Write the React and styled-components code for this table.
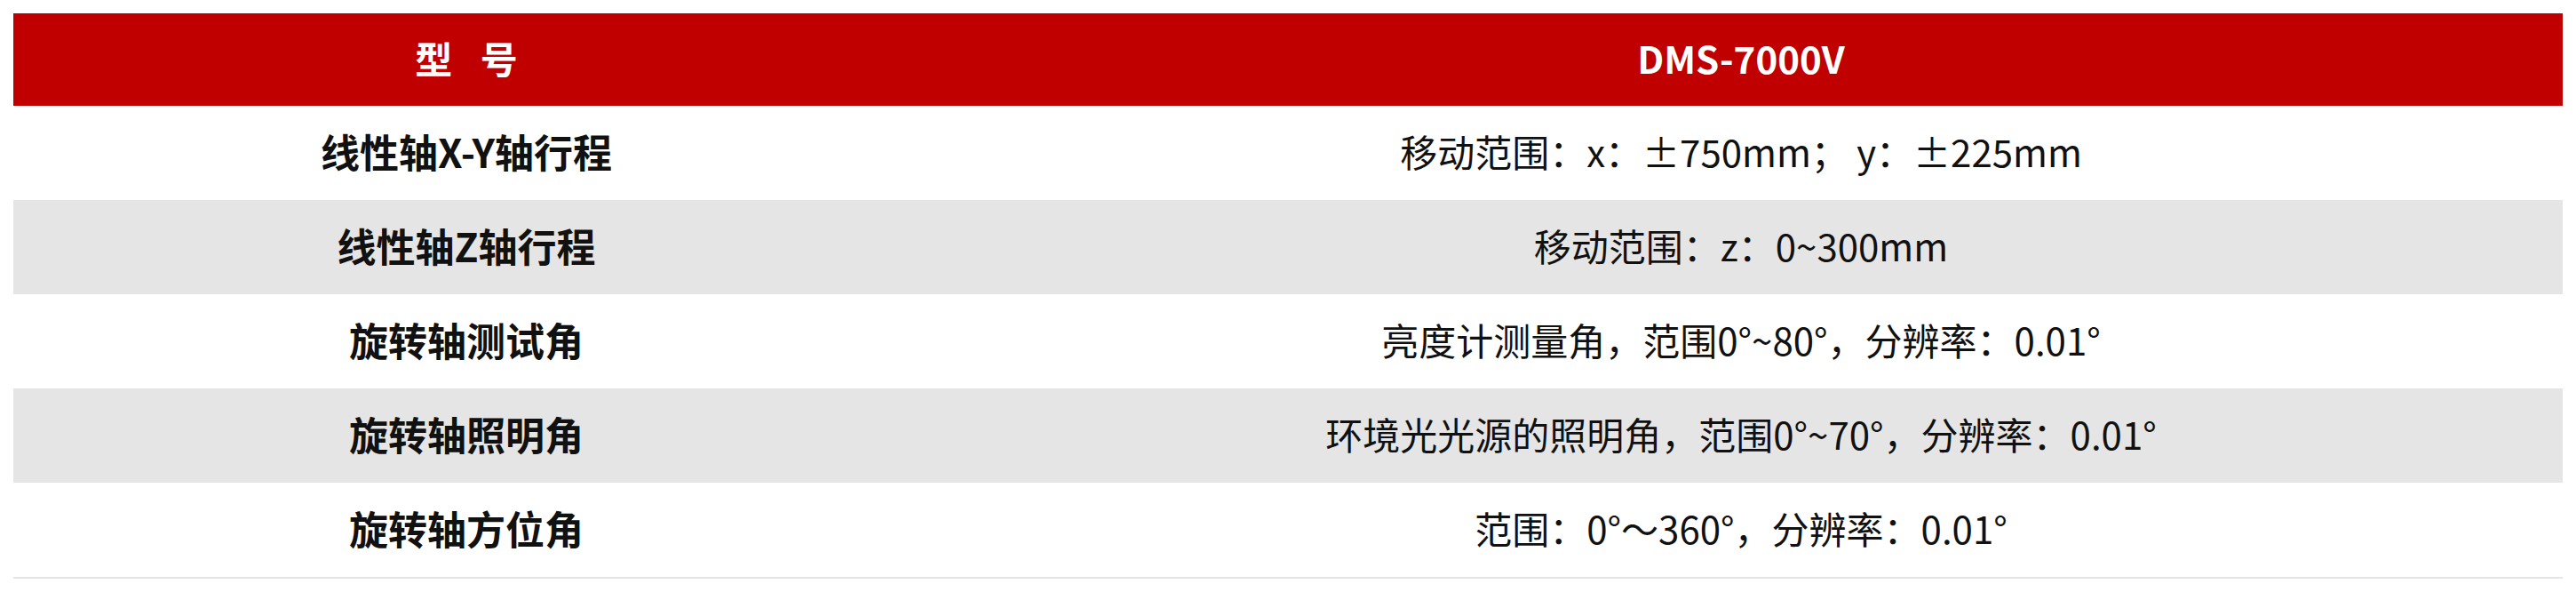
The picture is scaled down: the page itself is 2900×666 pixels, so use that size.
import React from 'react';
import styled, { createGlobalStyle } from 'styled-components';

const GlobalStyle = createGlobalStyle`
  html, body {
    margin: 0;
    padding: 0;
    background: #fff;
  }
  body {
    font-family: "Noto Sans CJK SC", "Noto Sans", sans-serif;
  }
`;

const Page = styled.div`
  padding: 15px;
`;

const Table = styled.div`
  width: 100%;
  border-bottom: 2px solid #e5e5e5;
`;

const Row = styled.div`
  display: grid;
  grid-template-columns: 1020px 1fr;
  height: ${(p) => (p.head ? '104px' : '106px')};
  background: ${(p) => {
    if (p.head) return '#c00000';
    return p.shade ? '#e5e5e5' : '#fff';
  }};
`;

const Cell = styled.div`
  display: flex;
  align-items: center;
  justify-content: center;
  padding-bottom: 4px;
  font-size: ${(p) => (p.label ? '44px' : '42px')};
  line-height: 1;
  color: ${(p) => (p.head ? '#fff' : '#111')};
  font-weight: ${(p) => (p.bold ? 700 : 400)};
  white-space: nowrap;
`;

const Spaced = styled.span`
  word-spacing: 22px;
`;

const specs = [
  ['线性轴X-Y轴行程', '移动范围：x：±750mm； y：±225mm'],
  ['线性轴Z轴行程', '移动范围：z：0~300mm'],
  ['旋转轴测试角', '亮度计测量角，范围0°~80°，分辨率：0.01°'],
  ['旋转轴照明角', '环境光光源的照明角，范围0°~70°，分辨率：0.01°'],
  ['旋转轴方位角', '范围：0°～360°，分辨率：0.01°'],
];

export default function App() {
  return (
    <>
      <GlobalStyle />
      <Page>
        <Table>
          <Row head>
            <Cell head bold><Spaced>型 号</Spaced></Cell>
            <Cell head bold>DMS-7000V</Cell>
          </Row>
          {specs.map(([label, value], i) => (
            <Row key={label} shade={i % 2 === 1}>
              <Cell label bold>{label}</Cell>
              <Cell>{value}</Cell>
            </Row>
          ))}
        </Table>
      </Page>
    </>
  );
}
